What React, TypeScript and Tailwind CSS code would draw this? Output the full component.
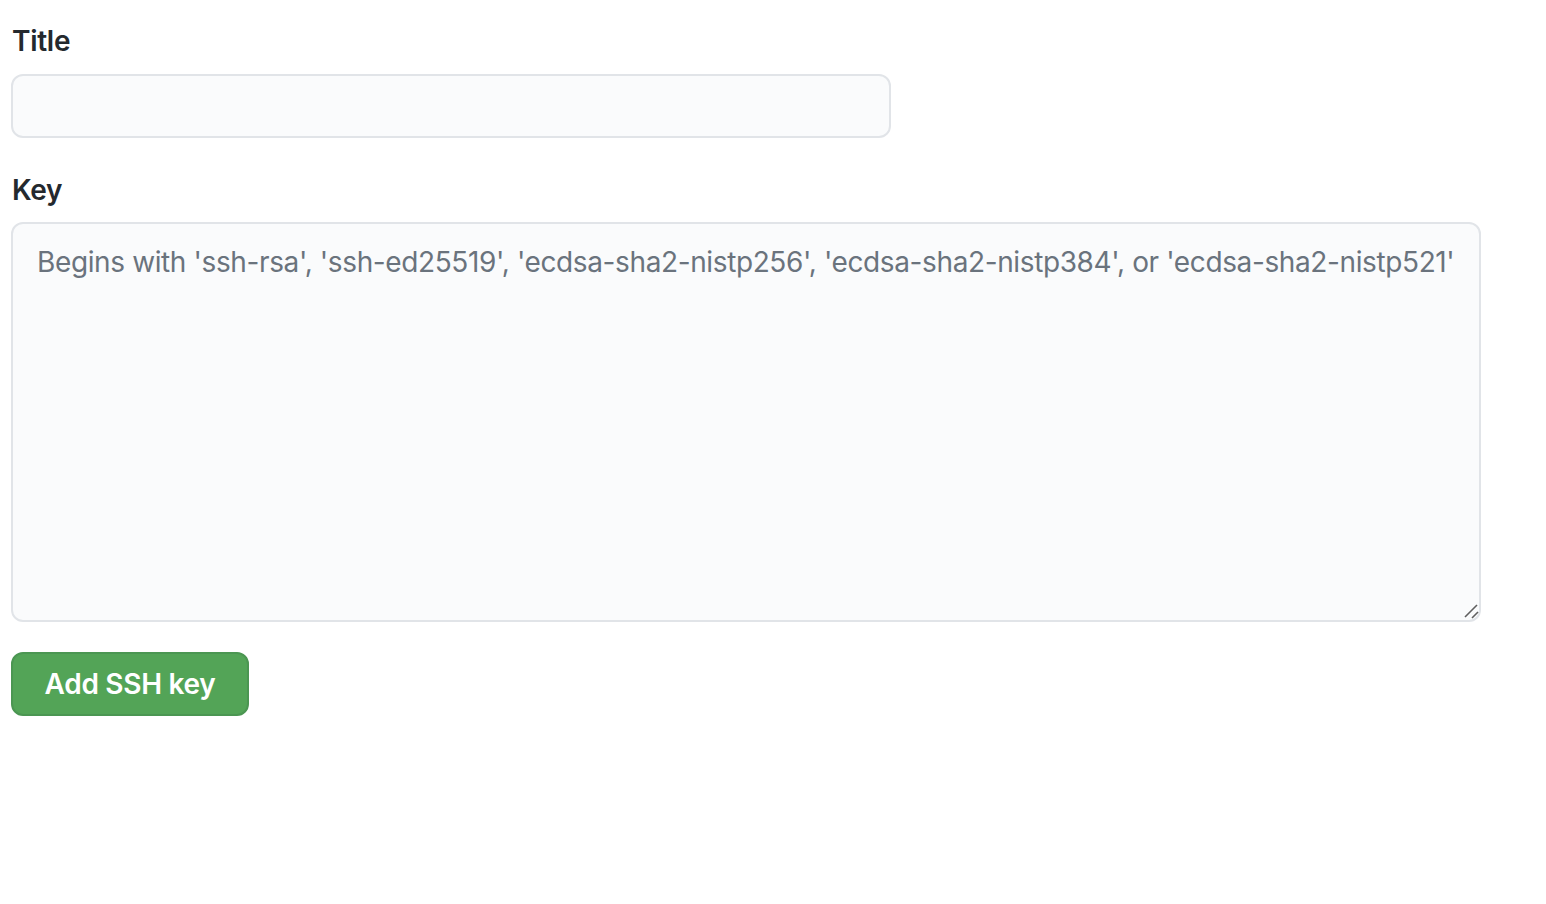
export default function App() {
  return (
    <div
      className="min-h-screen bg-white pl-[11px] pt-[20px]"
      style={{ fontFamily: 'Inter, "Liberation Sans", sans-serif' }}
    >
      <label className="block text-[28px] leading-[42px] font-semibold tracking-[-0.3px] text-[#24292e] pl-[1px] mb-[12px]">
        Title
      </label>
      <input
        type="text"
        className="block w-[880px] h-[64px] rounded-[12px] border-2 border-[#e1e4e8] bg-[#fafbfc] px-[24px] text-[28px] outline-none"
      />
      <label className="block text-[28px] leading-[42px] font-semibold tracking-[-0.3px] text-[#24292e] pl-[1px] mt-[31px] mb-[11px]">
        Key
      </label>
      <div className="relative w-[1470px] h-[400px]">
        <textarea
          placeholder="Begins with 'ssh-rsa', 'ssh-ed25519', 'ecdsa-sha2-nistp256', 'ecdsa-sha2-nistp384', or 'ecdsa-sha2-nistp521'"
          className="block w-full h-full rounded-[12px] border-2 border-[#e1e4e8] bg-[#fafbfc] pl-[24px] pr-[6px] pt-[18px] text-[28px] leading-[40px] tracking-[-0.38px] text-[#24292e] placeholder:text-[#6a737d] outline-none resize-none"
        />
        <svg
          className="absolute right-[2px] bottom-[3px] pointer-events-none"
          width="16"
          height="16"
          viewBox="0 0 16 16"
        >
          <line x1="2" y1="14" x2="14" y2="2" stroke="#5f5f5f" strokeWidth="1.6" />
          <line x1="9" y1="15" x2="15" y2="9" stroke="#5f5f5f" strokeWidth="1.6" />
        </svg>
      </div>
      <button className="mt-[30px] w-[238px] h-[64px] rounded-[12px] border-2 border-[#4b9652] bg-[#53a457] text-white text-[28px] font-semibold tracking-[-0.3px]">
        Add SSH key
      </button>
    </div>
  );
}
